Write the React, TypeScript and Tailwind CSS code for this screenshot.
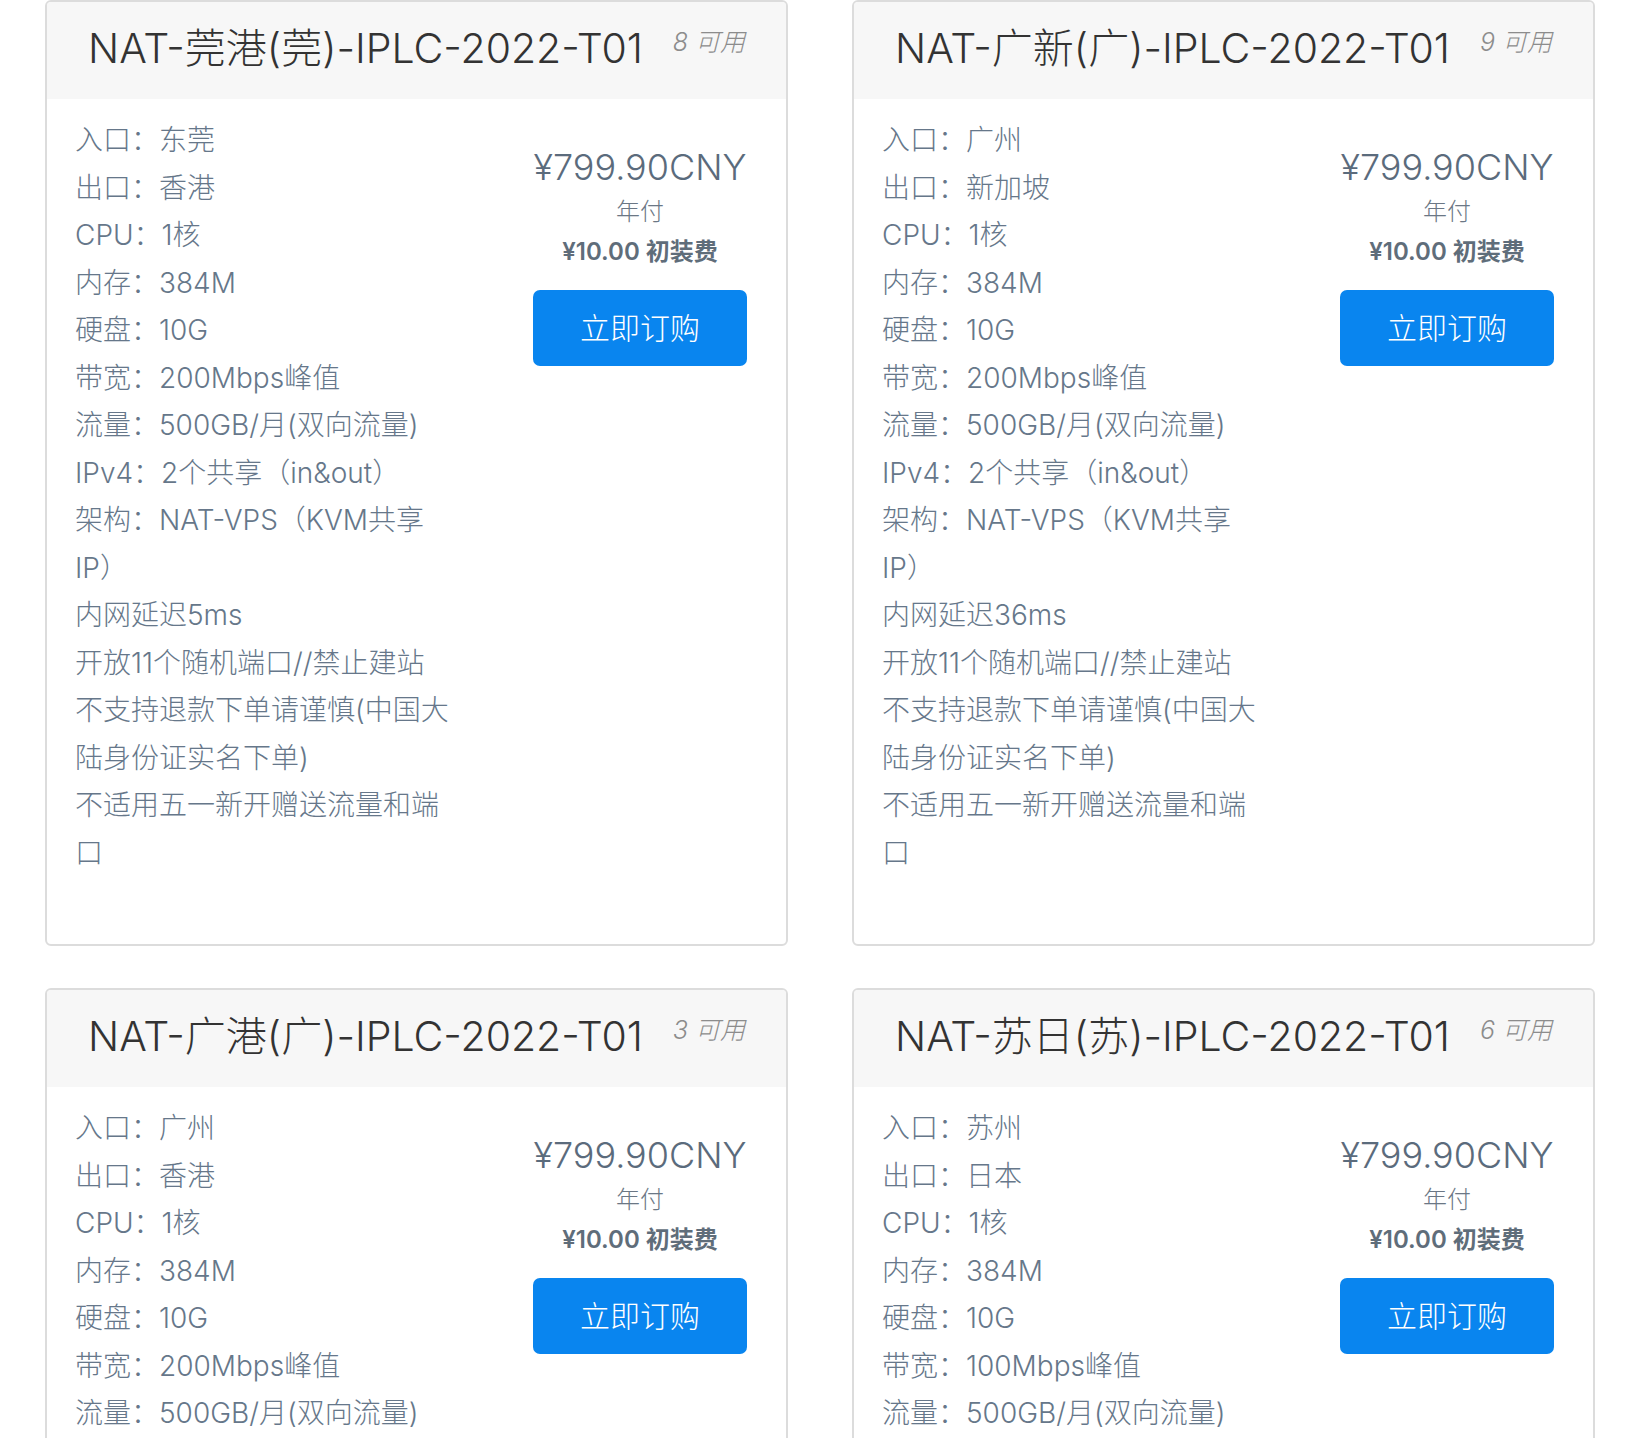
import React from "react";

type Card = {
  title: string;
  avail: number;
  lines: string[];
};

const common = (
  entry: string,
  exit: string,
  bw: string,
  latency: string
): string[] => [
  `入口：${entry}`,
  `出口：${exit}`,
  "CPU：1核",
  "内存：384M",
  "硬盘：10G",
  `带宽：${bw}峰值`,
  "流量：500GB/月(双向流量)",
  "IPv4：2个共享（in&out）",
  "架构：NAT-VPS（KVM共享IP）",
  `内网延迟${latency}`,
  "开放11个随机端口//禁止建站",
  "不支持退款下单请谨慎(中国大陆身份证实名下单)",
  "不适用五一新开赠送流量和端口",
];

const cards: Card[] = [
  {
    title: "NAT-莞港(莞)-IPLC-2022-T01",
    avail: 8,
    lines: common("东莞", "香港", "200Mbps", "5ms"),
  },
  {
    title: "NAT-广新(广)-IPLC-2022-T01",
    avail: 9,
    lines: common("广州", "新加坡", "200Mbps", "36ms"),
  },
  {
    title: "NAT-广港(广)-IPLC-2022-T01",
    avail: 3,
    lines: common("广州", "香港", "200Mbps", "5ms"),
  },
  {
    title: "NAT-苏日(苏)-IPLC-2022-T01",
    avail: 6,
    lines: common("苏州", "日本", "100Mbps", "5ms"),
  },
];

function ProductCard({ card }: { card: Card }) {
  return (
    <div className="rounded-[6px] border-2 border-[#dcdcdc] bg-white overflow-hidden">
      <div className="h-[97px] bg-[#f7f7f7] flex justify-between items-start pl-[41px] pr-[41px]">
        <h3 className="text-[41px] leading-[92px] font-light text-[#333333] whitespace-nowrap">
          {card.title}
        </h3>
        <span className="mt-[23px] text-[25px] leading-[34px] italic font-light text-[#8c8c8c] whitespace-nowrap">
          {card.avail} 可用
        </span>
      </div>
      <div className="flex pl-[28px] pr-[39px] pt-[18px] pb-[67px]">
        <div className="w-[380px] text-[28px] leading-[47.5px] font-light text-[#66778a]">
          {card.lines.map((l, i) => (
            <div key={i}>{l}</div>
          ))}
        </div>
        <div className="ml-auto w-[214px] flex flex-col items-center pt-[25px]">
          <div className="text-[36px] leading-[50px] font-light text-[#5b6b7c] whitespace-nowrap">
            ¥799.90CNY
          </div>
          <div className="text-[24px] leading-[40px] font-light text-[#6b7785]">年付</div>
          <div className="text-[24px] leading-[40px] font-semibold text-[#5f6d7a] whitespace-nowrap">
            ¥10.00 初装费
          </div>
          <button className="mt-[18px] w-[214px] h-[76px] rounded-[7px] bg-[#0985ef] text-white text-[30px] font-light">
            立即订购
          </button>
        </div>
      </div>
    </div>
  );
}

export default function App() {
  return (
    <div className="min-h-screen bg-white font-[family-name:Inter,'Noto_Sans_CJK_SC',sans-serif]">
      <div className="grid grid-cols-2 gap-x-[64px] gap-y-[42px] px-[45px]">
        {cards.map((c, i) => (
          <ProductCard key={i} card={c} />
        ))}
      </div>
    </div>
  );
}
